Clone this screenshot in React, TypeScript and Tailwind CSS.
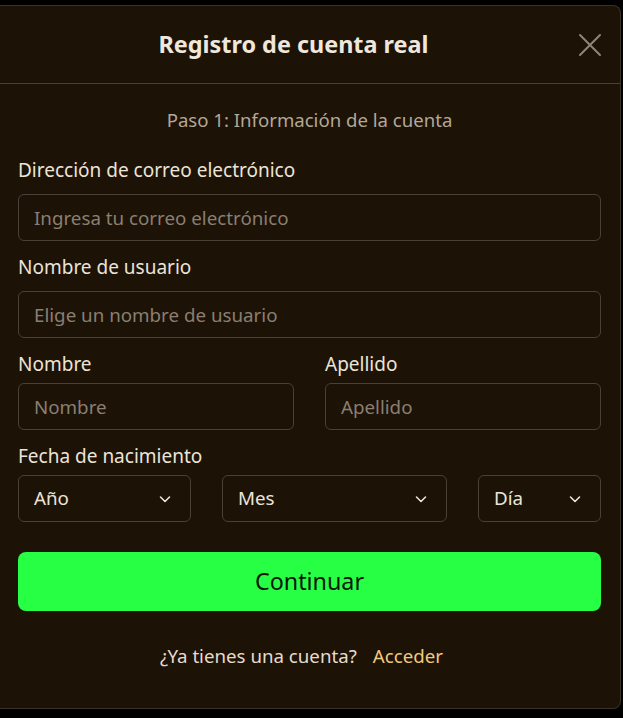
import React from 'react';

const Chevron = () => (
  <svg width="14" height="14" viewBox="0 0 14 14" fill="none" className="text-[#ece4d8]">
    <path d="M2.5 5l4.5 4.5L11.5 5" stroke="currentColor" strokeWidth="1.6" strokeLinecap="round" strokeLinejoin="round" />
  </svg>
);

const TextInput = ({ placeholder }: { placeholder: string }) => (
  <input
    type="text"
    placeholder={placeholder}
    className="w-full h-[47px] rounded-md border border-[#4a4136] bg-transparent px-[15px] text-[18.75px] text-[#ece4d8] placeholder:text-[#8a7f72] outline-none"
  />
);

const Select = ({ label, className }: { label: string; className: string }) => (
  <div
    className={`h-[47px] rounded-md border border-[#4a4136] flex items-center justify-between pl-[15px] pr-[18px] text-[18.75px] text-[#ece4d8] ${className}`}
  >
    <span>{label}</span>
    <Chevron />
  </div>
);

export default function App() {
  return (
    <div
      className="w-[623px] h-[718px] bg-black pt-[5px] overflow-hidden"
      style={{ fontFamily: '"Noto Sans", "Open Sans", sans-serif' }}
    >
      <div className="w-[621px] h-[704px] bg-[#1c1206] border border-l-0 border-[#3a3127] rounded-r-lg flex flex-col">
        {/* Header */}
        <div className="h-[78px] border-b border-[#4a4136] flex items-center pl-[18px] pr-[18px]">
          <h2 className="flex-1 text-center text-[23.4px] font-bold text-[#efe7db] pr-[9px]">Registro de cuenta real</h2>
          <button className="w-[24px] h-[24px] flex items-center justify-center text-[#8e857a]">
            <svg width="24" height="24" viewBox="0 0 24 24" fill="none">
              <path d="M2 2l20 20M22 2L2 22" stroke="currentColor" strokeWidth="2" strokeLinecap="round" />
            </svg>
          </button>
        </div>

        <div className="pl-[18px] pr-[19px] flex flex-col">
          <p className="mt-[24px] leading-[24px] text-center text-[18.6px] text-[#b3a898]">Paso 1: Información de la cuenta</p>

          <label className="mt-[26px] leading-[24px] text-[19px] text-[#ece4d8]">Dirección de correo electrónico</label>
          <div className="mt-[12px]">
            <TextInput placeholder="Ingresa tu correo electrónico" />
          </div>

          <label className="mt-[14px] leading-[24px] text-[19px] text-[#ece4d8]">Nombre de usuario</label>
          <div className="mt-[12px]">
            <TextInput placeholder="Elige un nombre de usuario" />
          </div>

          <div className="mt-[14px] grid grid-cols-2 gap-x-[31px]">
            <div className="flex flex-col">
              <label className="leading-[24px] text-[19px] text-[#ece4d8]">Nombre</label>
              <div className="mt-[7px]">
                <TextInput placeholder="Nombre" />
              </div>
            </div>
            <div className="flex flex-col">
              <label className="leading-[24px] text-[19px] text-[#ece4d8]">Apellido</label>
              <div className="mt-[7px]">
                <TextInput placeholder="Apellido" />
              </div>
            </div>
          </div>

          <label className="mt-[14px] leading-[24px] text-[19px] text-[#ece4d8]">Fecha de nacimiento</label>
          <div className="mt-[7px] flex gap-x-[31px]">
            <Select label="Año" className="w-[173px]" />
            <Select label="Mes" className="w-[225px]" />
            <Select label="Día" className="flex-1" />
          </div>

          <button className="mt-[30px] h-[59px] w-full rounded-lg bg-[#27ff45] text-[23.3px] text-[#0a1608]">
            Continuar
          </button>

          <p className="mt-[33px] pr-[16px] leading-[24px] text-center text-[18.7px] text-[#e6dccd]">
            ¿Ya tienes una cuenta?
            <span className="ml-[16px] text-[#f1c97c]">Acceder</span>
          </p>
        </div>
      </div>
    </div>
  );
}
